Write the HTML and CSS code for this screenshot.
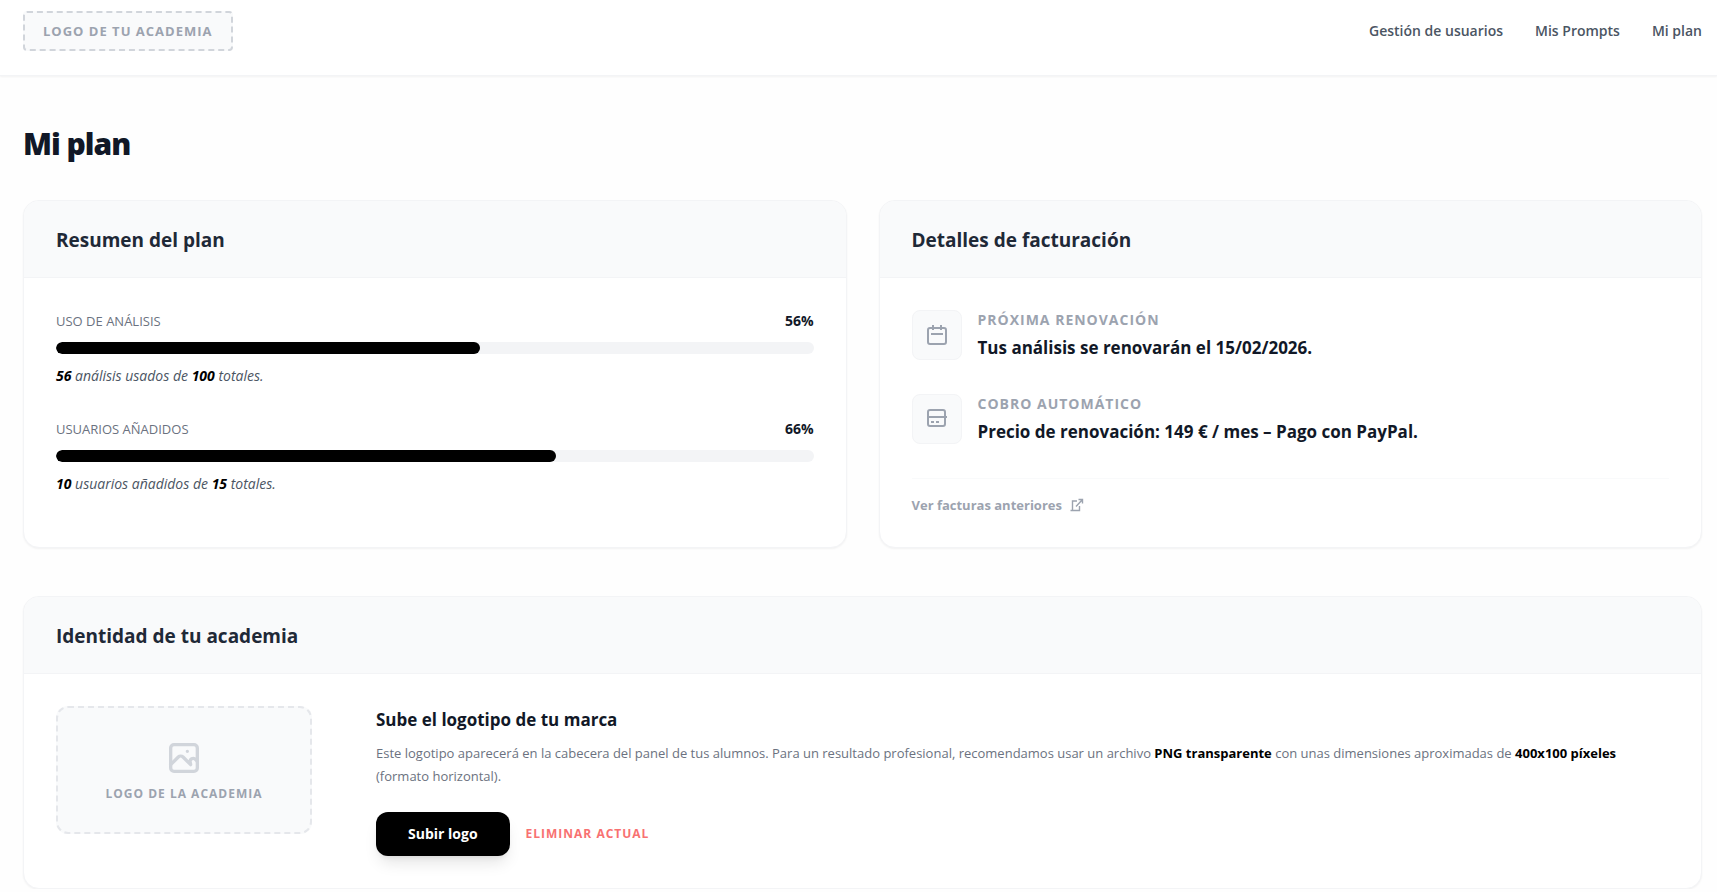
FILE: index.html
```html
<!DOCTYPE html>
<html lang="es">

<head>
    <meta charset="UTF-8" />
    <meta name="viewport" content="width=device-width, initial-scale=1.0" />
    <title>Mi plan</title>
    <link rel="stylesheet" href="styles.css">
</head>

<body>
    <header class="topbar">
        <div class="brand">LOGO DE TU ACADEMIA</div>
        <nav class="nav">
            <a href="#">Gestión de usuarios</a>
            <a href="#">Mis Prompts</a>
            <a href="#">Mi plan</a>
        </nav>
    </header>

    <main class="page">
        <h1>Mi plan</h1>

        <div class="grid">
            <section class="card">
                <h2 class="card-header">Resumen del plan</h2>
                <div class="card-body usage-list">
                    <div class="usage">
                        <div class="usage-top">
                            <span class="usage-label">USO DE ANÁLISIS</span>
                            <span class="usage-percent">56%</span>
                        </div>
                        <div class="bar">
                            <div class="bar-fill" style="width: 56%"></div>
                        </div>
                        <p class="usage-text"><strong>56</strong> análisis usados de <strong>100</strong> totales.</p>
                    </div>
                    <div class="usage">
                        <div class="usage-top">
                            <span class="usage-label">USUARIOS AÑADIDOS</span>
                            <span class="usage-percent">66%</span>
                        </div>
                        <div class="bar">
                            <div class="bar-fill" style="width: 66%"></div>
                        </div>
                        <p class="usage-text"><strong>10</strong> usuarios añadidos de <strong>15</strong> totales.</p>
                    </div>
                </div>
            </section>

            <section class="card">
                <h2 class="card-header">Detalles de facturación</h2>
                <div class="card-body">
                    <div class="detail">
                        <div class="detail-icon">
                            <svg width="24" height="24" viewBox="0 0 24 24">
                                <rect x="3" y="5" width="18" height="16" rx="2" />
                                <path d="M8 2v5M16 2v5M6 11h12" />
                            </svg>
                        </div>
                        <div>
                            <p class="detail-label">PRÓXIMA RENOVACIÓN</p>
                            <p class="detail-value">Tus análisis se renovarán el 15/02/2026.</p>
                        </div>
                    </div>
                    <div class="detail">
                        <div class="detail-icon">
                            <svg width="24" height="24" viewBox="0 0 24 24">
                                <rect x="3" y="3" width="17" height="16" rx="2" />
                                <path d="M3 10h19M6 15h3M11 15h3" />
                            </svg>
                        </div>
                        <div>
                            <p class="detail-label">COBRO AUTOMÁTICO</p>
                            <p class="detail-value">Precio de renovación: 149 € / mes – Pago con PayPal.</p>
                        </div>
                    </div>
                    <div class="invoices">
                        <a href="#">Ver facturas anteriores
                            <svg width="14" height="14" viewBox="0 0 14 14">
                                <path d="M7 3H2.5V12.5M0.5 12.5H9.5V8M8.5 1.5H12.5V5.5M12.5 1.5L6 8.5" />
                            </svg>
                        </a>
                    </div>
                </div>
            </section>
        </div>

        <section class="card">
            <h2 class="card-header">Identidad de tu academia</h2>
            <div class="card-body identity">
                <div class="logo-preview">
                    <svg width="40" height="40" viewBox="0 0 24 24">
                        <rect x="4" y="4" width="16" height="16" rx="2" />
                        <path d="M4 16l4.586-4.586a2 2 0 012.828 0L16 16l-.4-2a2 2 0 012.8-1.6L20 14M14 8h.01" />
                    </svg>
                    <span>LOGO DE LA ACADEMIA</span>
                </div>
                <div class="identity-info">
                    <h3>Sube el logotipo de tu marca</h3>
                    <p>Este logotipo aparecerá en la cabecera del panel de tus alumnos. Para un resultado profesional, recomendamos usar un archivo <strong>PNG transparente</strong> con unas dimensiones aproximadas de <strong>400x100 píxeles</strong> (formato horizontal).</p>
                    <div class="actions">
                        <button type="button" class="btn-upload">Subir logo</button>
                        <button type="button" class="btn-remove">ELIMINAR ACTUAL</button>
                    </div>
                </div>
            </div>
        </section>
    </main>
</body>

</html>
```
FILE: styles.css
```css
* {
    box-sizing: border-box;
}

body {
    font-family: "Open Sans", "Noto Sans", sans-serif;
    margin: 0;
    background: #fefefe;
    color: #111827;
}

h1,
h2,
h3,
p {
    margin: 0;
}

button {
    font-family: inherit;
    border: none;
    cursor: pointer;
}

strong {
    color: #000;
}

svg {
    fill: none;
    stroke: currentColor;
    stroke-width: 2;
}

.topbar {
    display: flex;
    justify-content: space-between;
    align-items: flex-start;
    padding: 11px 15px 24px 23px;
    background: #fff;
    border-bottom: 1px solid #f3f4f6;
    box-shadow: 0 1px 2px rgba(0, 0, 0, 0.05);
}

.brand {
    padding: 8px 18px;
    background: #f9fafb;
    border: 2px dashed #d1d5db;
    border-radius: 4px;
    color: #9ca3af;
    font-size: 13px;
    line-height: 20px;
    font-weight: 700;
    letter-spacing: 1px;
}

.nav {
    display: flex;
    gap: 32px;
}

.nav a {
    color: #4b5563;
    font-size: 14px;
    line-height: 40px;
    font-weight: 600;
    text-decoration: none;
}

.page {
    padding: 48px 15px 0 23px;
}

h1 {
    margin-bottom: 36px;
    font-size: 30px;
    line-height: 40px;
    font-weight: 800;
    letter-spacing: -1px;
}

.grid {
    display: grid;
    grid-template-columns: 1fr 1fr;
    gap: 32px;
    margin-bottom: 48px;
}

.card {
    background: #fff;
    border: 1px solid #f3f4f6;
    border-radius: 16px;
    box-shadow: 0 1px 2px rgba(0, 0, 0, 0.05);
    overflow: hidden;
}

.card-header {
    padding: 25px 32px 23px;
    background: #f9fafb;
    border-bottom: 1px solid #f3f4f6;
    color: #1f2937;
    font-size: 19px;
    line-height: 28px;
    font-weight: 700;
}

.card-body {
    padding: 32px;
}

.usage-list {
    display: flex;
    flex-direction: column;
    gap: 32px;
}

.usage-top {
    display: flex;
    justify-content: space-between;
    align-items: center;
    margin-bottom: 10px;
    line-height: 22px;
}

.usage-label {
    color: #6b7280;
    font-size: 13px;
    font-weight: 500;
}

.usage-percent {
    font-size: 14px;
    font-weight: 700;
}

.bar {
    height: 12px;
    background: #f3f4f6;
    border-radius: 6px;
    overflow: hidden;
}

.bar-fill {
    height: 100%;
    background: #000;
    border-radius: 6px;
}

.usage-text {
    margin-top: 12px;
    color: #4b5563;
    font-size: 14px;
    line-height: 20px;
    font-style: italic;
}

.detail {
    display: flex;
    gap: 16px;
    margin-bottom: 32px;
}

.detail-icon {
    display: flex;
    flex-shrink: 0;
    align-items: center;
    justify-content: center;
    width: 50px;
    height: 50px;
    background: #f9fafb;
    border: 1px solid #f3f4f6;
    border-radius: 8px;
    color: #9ca3af;
}

.detail-label {
    margin-bottom: 4px;
    color: #9ca3af;
    font-size: 14px;
    line-height: 20px;
    font-weight: 700;
    letter-spacing: 1px;
}

.detail-value {
    font-size: 17px;
    line-height: 28px;
    font-weight: 700;
}

.invoices {
    display: flex;
    padding-top: 16px;
    border-top: 1px solid #f9fafb;
}

.invoices a {
    display: flex;
    align-items: center;
    gap: 8px;
    color: #9ca3af;
    font-size: 13px;
    line-height: 20px;
    font-weight: 700;
    text-decoration: none;
}

.invoices svg {
    stroke-width: 1.4;
}

.identity {
    display: flex;
    gap: 64px;
}

.logo-preview {
    display: flex;
    flex-direction: column;
    flex-shrink: 0;
    align-items: center;
    justify-content: center;
    gap: 8px;
    width: 256px;
    height: 128px;
    background: #f9fafb;
    border: 2px dashed #e5e7eb;
    border-radius: 12px;
    color: #9ca3af;
    font-size: 12px;
    line-height: 16px;
    font-weight: 700;
    letter-spacing: 1px;
}

.logo-preview svg {
    color: #d1d5db;
    stroke-linecap: round;
    stroke-linejoin: round;
}

.identity-info h3 {
    margin-bottom: 8px;
    font-size: 17px;
    line-height: 28px;
    font-weight: 700;
}

.identity-info p {
    color: #6b7280;
    font-size: 13px;
    line-height: 23px;
}

.actions {
    display: flex;
    align-items: center;
    gap: 16px;
    margin-top: 24px;
}

.btn-upload {
    padding: 12px 32px;
    background: #000;
    border-radius: 12px;
    box-shadow: 0 10px 15px -3px rgba(0, 0, 0, 0.1), 0 4px 6px -4px rgba(0, 0, 0, 0.1);
    color: #fff;
    font-size: 14px;
    line-height: 20px;
    font-weight: 700;
}

.btn-remove {
    padding: 0;
    background: none;
    color: #f87171;
    font-size: 12px;
    line-height: 16px;
    font-weight: 700;
    letter-spacing: 1px;
}

@media (max-width: 900px) {
    .grid {
        grid-template-columns: 1fr;
    }

    .identity {
        flex-direction: column;
        gap: 32px;
    }
}
```
